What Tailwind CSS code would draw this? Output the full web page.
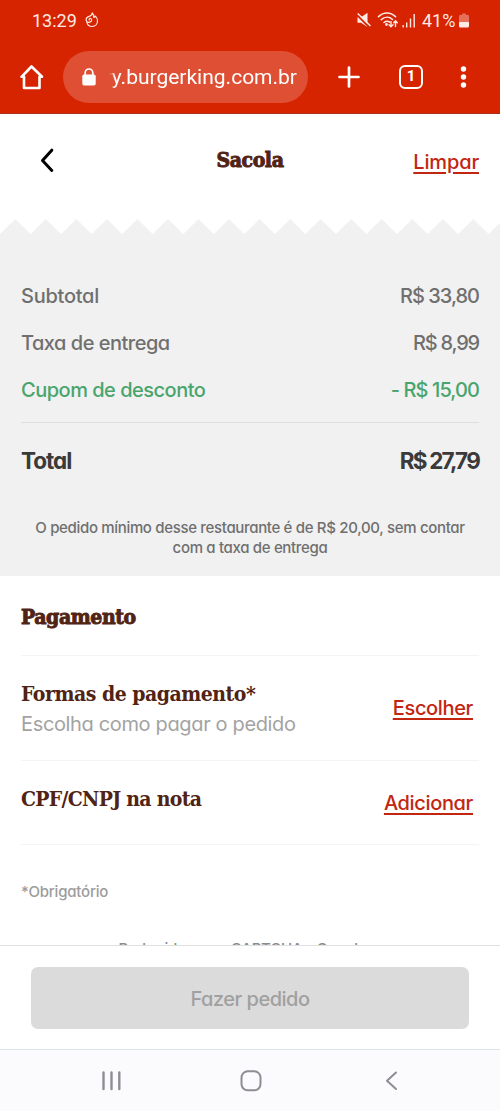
<!DOCTYPE html>
<html lang="pt-BR">
<head>
<meta charset="utf-8">
<meta name="viewport" content="width=device-width, initial-scale=1">
<title>Sacola</title>
<script src="https://cdn.jsdelivr.net/npm/@tailwindcss/browser@4"></script>
</head>
<body class="h-[1111px] w-[500px] overflow-hidden bg-white">
<div class="flex h-[1111px] w-[500px] flex-col overflow-hidden font-['Inter',sans-serif] [font-feature-settings:'cv11'] text-[20px] font-[450] text-[#6f6f6f]">

  <header class="flex h-[114px] shrink-0 flex-col border-b border-[#a8301c] bg-[#d62300] font-['Roboto',sans-serif] font-normal text-white">
    <div class="flex h-[40px] items-center pl-[32px] pr-[31px] text-[18px] text-[#ffeae6]">
      <span class="w-[45px] tracking-[0px]">13:29</span>
      <svg class="ml-[8px]" width="14" height="16" viewBox="0 0 14 16" fill="none" stroke="#ffeae6" stroke-width="1.200" stroke-linecap="round" stroke-linejoin="round"><path d="M1.900 10.300C2.600 13 4.600 14.500 7 14.500C10.300 14.500 12.500 12 12.500 9C12.500 7 11.700 5.400 10.400 4.100C10 4.700 9.400 5.100 8.700 5.300C9 3.600 8.400 2 7.200 1C7.100 3 6 3.900 4.200 4.400C2.200 5 .9 6.500 1.200 8.300C1.600 10.300 4 10.900 5.600 9.800C7 8.800 7 6.900 5.600 6.500C4.600 6.300 3.800 7.100 4.200 8"/></svg>
      <div class="ml-auto flex items-center">
        <svg width="16" height="16" viewBox="0 0 16 16"><path d="M1.500 5.200H5L11.500.8V15L5 10.700H1.500Z" fill="#ffeae6"/><path d="M.5 2.500L13 15" stroke="#d62300" stroke-width="1.800"/><path d="M1.700 1.500L14.500 14" stroke="#ffeae6" stroke-width="1.500"/></svg>
        <svg class="ml-[5px]" width="22" height="18" viewBox="0 0 22 18" fill="none" stroke="#ffeae6" stroke-width="1.600" stroke-linecap="round"><path d="M1.500 5.600C6.500 .8 13.500.8 18.500 5.600M4.300 8.700C7.800 5.500 12.300 5.500 15.500 8.500M7 11.500C8.800 10 11 10 12.600 11.200"/><circle cx="9.500" cy="13.500" r=".6" fill="#ffeae6"/><path d="M14 10.500V15.500M12 13.800L14 15.800L16 13.800M18.500 15.500V10M16.700 11.700L18.500 9.700L20.300 11.700" stroke-width="1.400"/></svg>
        <svg class="ml-[3px]" width="14" height="15" viewBox="0 0 14 15" fill="#ffeae6"><path d="M.5 12h1.400v2.500H.5zM4 9.500h1.400v5H4zM7.800 5.500h1.400v9H7.800zM11.500 1h1.400v13.500h-1.400z"/></svg>
        <span class="ml-[6px] w-[34px] whitespace-nowrap">41%</span>
        <svg class="ml-[3px]" width="10" height="15" viewBox="0 0 10 15"><path d="M3 .5H7V2H9Q10 2 10 3V9H0V3Q0 2 1 2H3Z" fill="#e56f5a"/><path d="M0 9H10V13Q10 14.500 8.500 14.500H1.500Q0 14.500 0 13Z" fill="#ffeae6"/></svg>
      </div>
    </div>
    <div class="flex h-[73px] items-center pl-[19px]">
      <svg width="25" height="26" viewBox="0 0 25 26" fill="none" stroke="#fff" stroke-width="2.600" stroke-linejoin="round"><path d="M12.500 2.500L2.500 12.800H5V24H20.500V12.800H23Z"/></svg>
      <div class="ml-[19px] flex h-[52px] w-[245px] items-center rounded-full bg-[#de4f33] pl-[19px]">
        <svg width="14" height="18" viewBox="0 0 14 18"><path d="M3.200 8V4.800A3.800 3.800 0 0 1 10.800 4.800V8" fill="none" stroke="#fff" stroke-width="1.700"/><rect x=".3" y="6.500" width="13.400" height="11" rx="1.800" fill="#fff"/></svg>
        <span class="ml-[13px] flex w-[188px] justify-end overflow-hidden whitespace-nowrap text-[21px] leading-[30px] [mask-image:linear-gradient(to_right,transparent,black_6px)]">ry.burgerking.com.br</span>
      </div>
      <svg class="ml-[30px]" width="22" height="22" viewBox="0 0 22 22" stroke="#fff" stroke-width="2.700" stroke-linecap="round"><path d="M11 1.500V20.500M1.500 11H20.500"/></svg>
      <div class="ml-[39px] flex h-[24px] w-[24px] items-center justify-center rounded-[6px] border-[2.500px] border-white text-[15px] font-bold leading-none">1</div>
      <svg class="ml-[37px]" width="7" height="22" viewBox="0 0 7 22" fill="#fff"><circle cx="3.500" cy="3" r="2.700"/><circle cx="3.500" cy="11" r="2.700"/><circle cx="3.500" cy="19" r="2.700"/></svg>
    </div>
  </header>

  <div class="grid h-[105px] shrink-0 grid-cols-3 px-[21px] pt-[32px]">
    <svg class="ml-[18px] mt-[2px]" width="16" height="25" viewBox="0 0 16 25" fill="none" stroke="#000" stroke-width="3" stroke-linecap="round" stroke-linejoin="round"><path d="M12.800 2.200L3.500 12.500L12.800 22.500"/></svg>
    <h1 class="text-center font-['DejaVu_Serif_Condensed','DejaVu_Serif',serif] text-[21px] font-bold leading-[28px] tracking-[-0.4px] text-[#502314] [-webkit-text-stroke:0.9px_#502314]">Sacola</h1>
    <a class="text-right leading-[32px] tracking-[-0.15px] text-[#c22610] underline decoration-[2px] underline-offset-[3px]">Limpar</a>
  </div>

  <section class="h-[357px] shrink-0 bg-[#f1f1f1]">
    <svg class="block" width="500" height="15" viewBox="0 0 500 15"><defs><pattern id="teeth" width="30.540" height="15" patternUnits="userSpaceOnUse"><path d="M0 0H15.270L0 15ZM15.270 0H30.540V15Z" fill="#fff"/></pattern></defs><rect width="500" height="15" fill="url(#teeth)"/></svg>
    <div class="mx-[21px] pt-[38px]">
      <div class="flex h-[47px] items-center justify-between"><span class="tracking-[-0.25px]">Subtotal</span><span class="tracking-[-1px]">R$ 33,80</span></div>
      <div class="flex h-[47px] items-center justify-between"><span class="tracking-[-0.5px]">Taxa de entrega</span><span class="tracking-[-1.200px]">R$ 8,99</span></div>
      <div class="flex h-[47px] items-center justify-between text-[#49a56d]"><span class="tracking-[-0.5px]">Cupom de desconto</span><span class="tracking-[-0.900px]">- R$ 15,00</span></div>
      <div class="mt-[9px] flex h-[77px] items-center justify-between border-t border-[#dedede] text-[22.500px] font-bold text-[#3a3a3a]"><span class="tracking-[-1px]">Total</span><span class="tracking-[-1.800px]">R$ 27,79</span></div>
    </div>
    <p class="mt-[19px] text-center text-[15px] leading-[20px] tracking-[-0.330px]">O pedido mínimo desse restaurante é de R$ 20,00, sem contar<br>com a taxa de entrega</p>
  </section>

  <main class="h-[369px] shrink-0 overflow-hidden px-[21px]">
    <h2 class="flex h-[80px] items-center border-b border-[#f4f4f4] pt-[2px] font-['DejaVu_Serif_Condensed','DejaVu_Serif',serif] text-[21px] font-bold tracking-[-0.400px] text-[#502314] [-webkit-text-stroke:0.9px_#502314]">Pagamento</h2>
    <div class="flex h-[105px] items-center justify-between border-b border-[#f4f4f4] pr-[6px]">
      <div class="pt-[2px]">
        <h3 class="font-['DejaVu_Serif_Condensed','DejaVu_Serif',serif] text-[21px] font-bold leading-[31px] tracking-[-0.480px] text-[#502314]">Formas de pagamento*</h3>
        <p class="leading-[31px] font-normal tracking-[-0.350px] text-[#a3a3a3]">Escolha como pagar o pedido</p>
      </div>
      <a class="tracking-[-0.350px] text-[#c22610] underline decoration-[2px] underline-offset-[3px]">Escolher</a>
    </div>
    <div class="flex h-[84px] items-center justify-between border-b border-[#f4f4f4] pr-[6px]">
      <h3 class="pb-[8px] font-['DejaVu_Serif_Condensed','DejaVu_Serif',serif] text-[21px] font-bold tracking-[-0.700px] text-[#502314]">CPF/CNPJ na nota</h3>
      <a class="tracking-[-0.350px] text-[#c22610] underline decoration-[2px] underline-offset-[3px]">Adicionar</a>
    </div>
    <p class="mt-[37px] text-[15px] leading-[20px] tracking-[-0.200px] text-[#9c9c9c]">*Obrigatório</p>
    <p class="mt-[37px] pr-[15px] text-center text-[15px] leading-[20px] tracking-[-0.220px] text-[#8c8c8c]">Protegido por reCAPTCHA - Google</p>
  </main>

  <div class="h-[104px] shrink-0 border-t border-[#e0e0e0] px-[31px] pt-[21px]">
    <button class="block h-[62px] w-full rounded-[7px] bg-[#dbdbdb] pt-[2px] text-[20px] tracking-[-0.500px] text-[#a0a0a0]">Fazer pedido</button>
  </div>

  <nav class="flex h-[62px] shrink-0 border-t border-[#dfe3ea] bg-[#fbfbfe] pt-[20px]">
    <svg class="ml-[101px]" width="21" height="22" viewBox="0 0 21 22" stroke="#8d8d92" stroke-width="2.400" stroke-linecap="round"><path d="M2.500 2.500V19M10.500 2.500V19M18.300 2.500V19"/></svg>
    <svg class="ml-[118px]" width="22" height="22" viewBox="0 0 22 22" fill="none" stroke="#8d8d92" stroke-width="2"><rect x="1.500" y="1.300" width="19" height="19" rx="6.200"/></svg>
    <svg class="ml-[122px]" width="14" height="22" viewBox="0 0 14 22" fill="none" stroke="#8d8d92" stroke-width="2" stroke-linecap="round" stroke-linejoin="round"><path d="M12 2.500L3 10.800L12 19"/></svg>
  </nav>
</div>
</body>
</html>
